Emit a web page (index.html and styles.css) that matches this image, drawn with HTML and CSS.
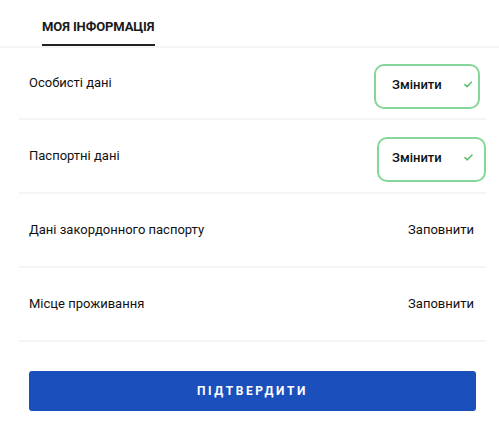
FILE: index.html
```html
<!DOCTYPE html>
<html lang="uk">
<head>
<meta charset="utf-8">
<title>Моя інформація</title>
<link rel="stylesheet" href="styles.css">
</head>
<body>
  <nav class="tabs">
    <div class="tab tab--active">МОЯ ІНФОРМАЦІЯ</div>
  </nav>
  <main class="page">
    <div class="list">
      <div class="row row--first">
        <span class="label">Особисті дані</span>
        <button class="edit edit--a" type="button">
          <span>Змінити</span>
          <svg class="check" width="9" height="7" viewBox="0 0 9 7"><polyline points="1,3.6 3.3,5.8 8,1" fill="none" stroke="#5fbf6f" stroke-width="1.6" stroke-linecap="round" stroke-linejoin="round"/></svg>
        </button>
      </div>
      <div class="row">
        <span class="label">Паспортні дані</span>
        <button class="edit edit--b" type="button">
          <span>Змінити</span>
          <svg class="check" width="9" height="7" viewBox="0 0 9 7"><polyline points="1,3.6 3.3,5.8 8,1" fill="none" stroke="#5fbf6f" stroke-width="1.6" stroke-linecap="round" stroke-linejoin="round"/></svg>
        </button>
      </div>
      <div class="row">
        <span class="label">Дані закордонного паспорту</span>
        <span class="fill">Заповнити</span>
      </div>
      <div class="row">
        <span class="label">Місце проживання</span>
        <span class="fill">Заповнити</span>
      </div>
    </div>
    <button class="submit" type="button">ПІДТВЕРДИТИ</button>
  </main>
</body>
</html>
```

FILE: styles.css
```css
* { box-sizing: border-box; }

body {
  margin: 0;
  background: #ffffff;
  font-family: Roboto, "Noto Sans", Arial, sans-serif;
  color: #111111;
}

.tabs {
  border-bottom: 2px solid #f5f5f5;
  display: flex;
  padding-left: 42px;
}

.tab {
  padding-top: 19px;
  padding-bottom: 9px;
  font-size: 13px;
  line-height: 16px;
  font-weight: 700;
  letter-spacing: -0.1px;
  color: #1a1a1a;
}

.tab--active {
  border-bottom: 2px solid #222222;
  width: 113px;
}

.page {
  margin-left: 19px;
  width: 467px;
}

.row {
  display: flex;
  align-items: center;
  justify-content: space-between;
  height: 74px;
  padding: 0 10px;
  border-bottom: 2px solid #f5f5f5;
}

.row--first {
  height: 72px;
}

.label {
  font-size: 13px;
  line-height: 16px;
  font-weight: 400;
}

.fill {
  font-size: 13px;
  line-height: 16px;
  font-weight: 400;
  margin-right: 2px;
}

.edit {
  display: flex;
  align-items: center;
  height: 45px;
  margin-top: 7px;
  background: #ffffff;
  border: 2px solid #86d699;
  border-radius: 10px;
  font-family: inherit;
  font-size: 13px;
  line-height: 16px;
  font-weight: 500;
  color: #111111;
  padding-bottom: 5px;
  cursor: pointer;
}

.edit--a {
  width: 106px;
  padding-left: 16px;
  margin-right: -4px;
}

.edit--b {
  width: 109px;
  padding-left: 13px;
  margin-right: -10px;
}

.check {
  margin-left: 22px;
}

.submit {
  display: block;
  margin: 29px 10px 0;
  width: 447px;
  height: 40px;
  border: 0;
  border-radius: 3px;
  background: #1b4fbb;
  color: #ffffff;
  font-family: inherit;
  font-size: 12px;
  font-weight: 700;
  letter-spacing: 2.6px;
  cursor: pointer;
}
```
